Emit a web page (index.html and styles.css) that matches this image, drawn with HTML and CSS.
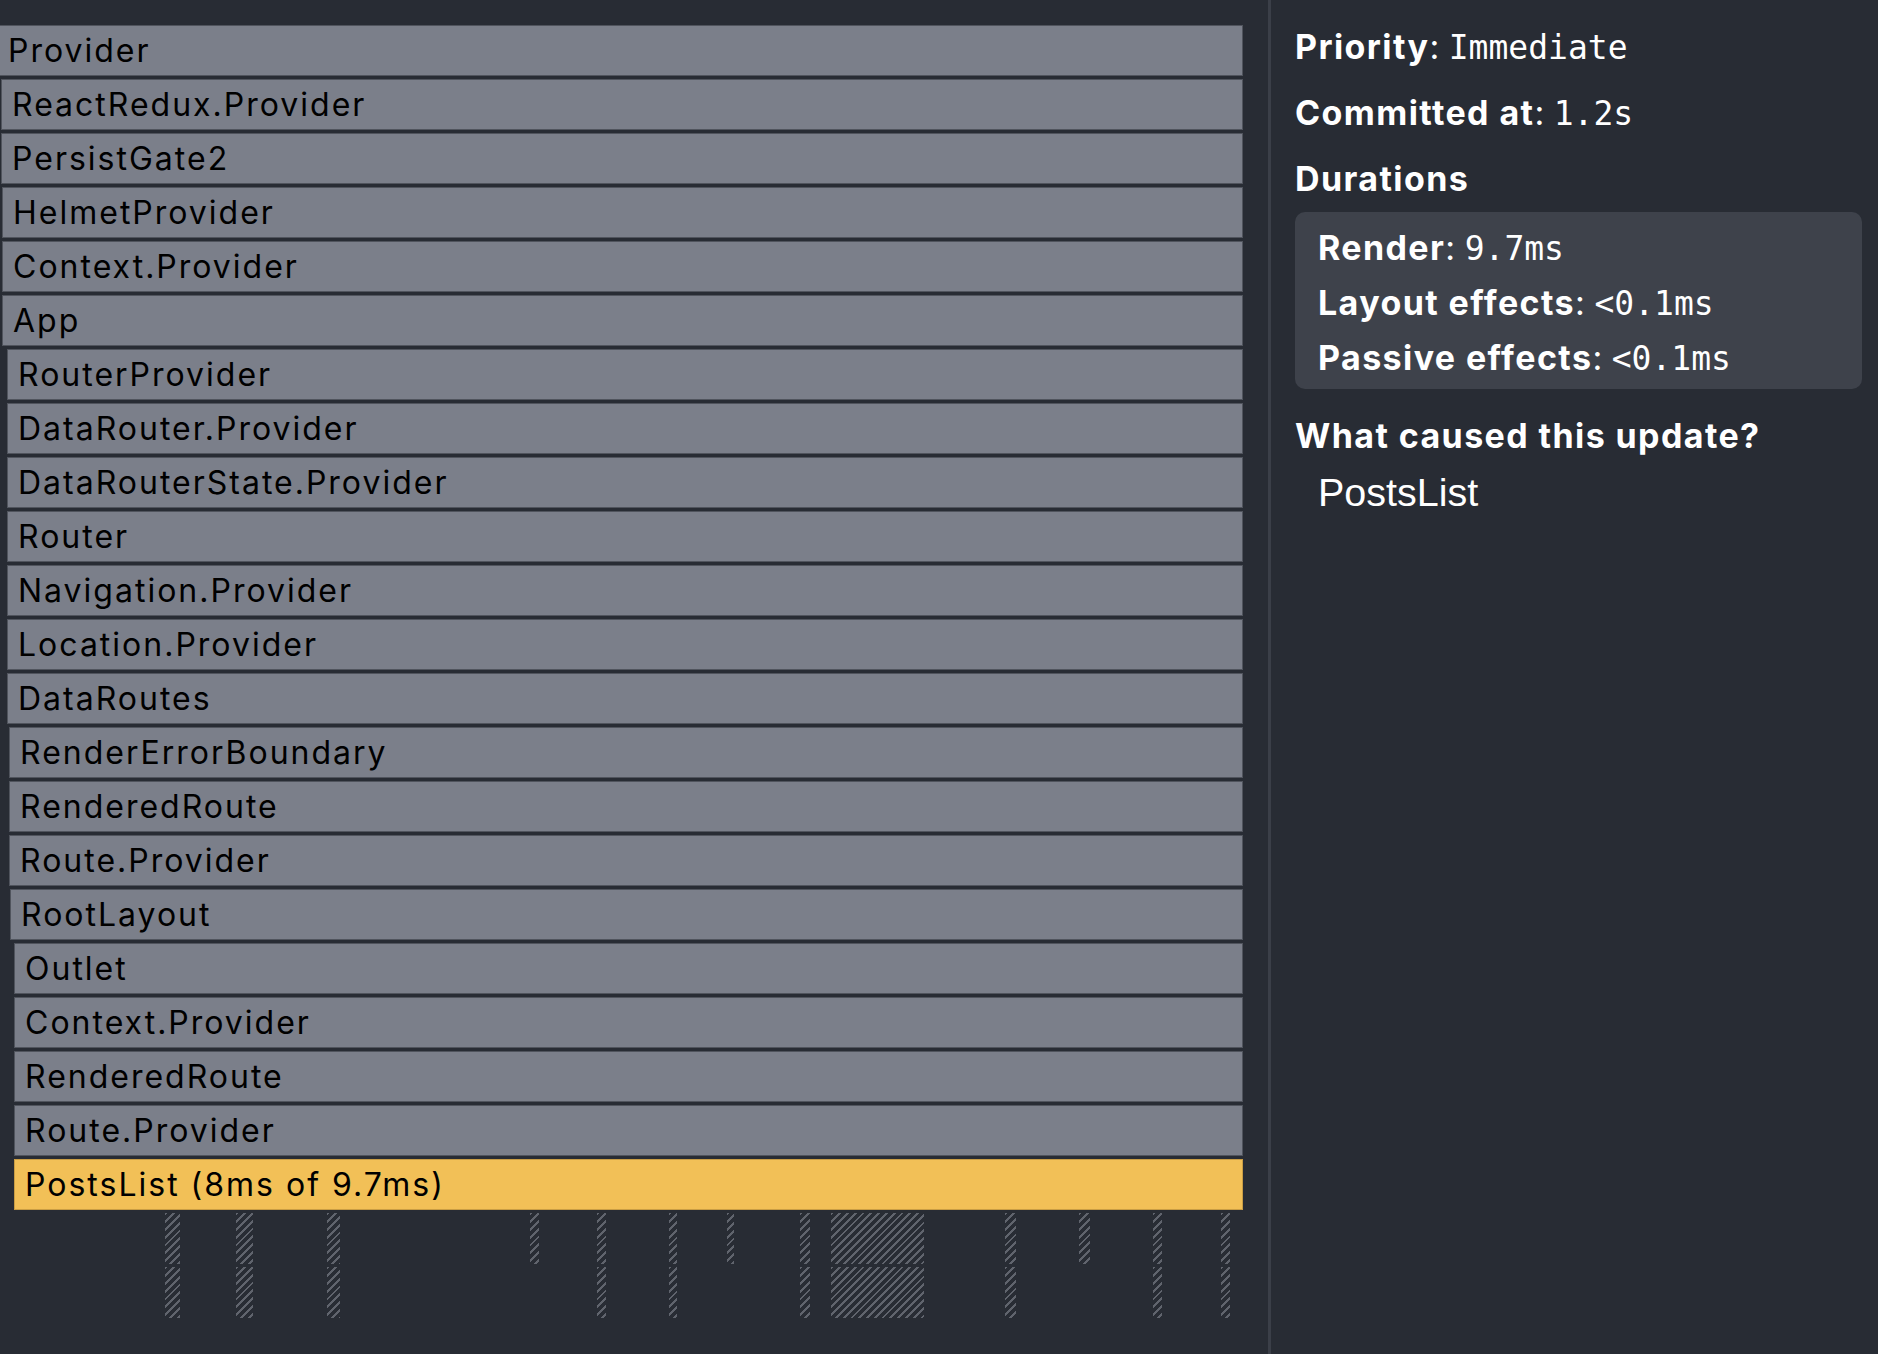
FILE: index.html
```html
<!DOCTYPE html>
<html lang="en">
<head>
<meta charset="utf-8">
<title>Profiler – commit details</title>
<link rel="stylesheet" href="styles.css">
</head>
<body>
<main class="chart">
  <div class="rows">
    <div class="bar" style="margin-left:-3px">Provider</div>
    <div class="bar" style="margin-left:1px">ReactRedux.Provider</div>
    <div class="bar" style="margin-left:1px">PersistGate2</div>
    <div class="bar" style="margin-left:2px">HelmetProvider</div>
    <div class="bar" style="margin-left:2px">Context.Provider</div>
    <div class="bar" style="margin-left:2px">App</div>
    <div class="bar" style="margin-left:7px">RouterProvider</div>
    <div class="bar" style="margin-left:7px">DataRouter.Provider</div>
    <div class="bar" style="margin-left:7px">DataRouterState.Provider</div>
    <div class="bar" style="margin-left:7px">Router</div>
    <div class="bar" style="margin-left:7px">Navigation.Provider</div>
    <div class="bar" style="margin-left:7px">Location.Provider</div>
    <div class="bar" style="margin-left:7px">DataRoutes</div>
    <div class="bar" style="margin-left:9px">RenderErrorBoundary</div>
    <div class="bar" style="margin-left:9px">RenderedRoute</div>
    <div class="bar" style="margin-left:9px">Route.Provider</div>
    <div class="bar" style="margin-left:10px">RootLayout</div>
    <div class="bar" style="margin-left:14px">Outlet</div>
    <div class="bar" style="margin-left:14px">Context.Provider</div>
    <div class="bar" style="margin-left:14px">RenderedRoute</div>
    <div class="bar" style="margin-left:14px">Route.Provider</div>
    <div class="bar hot" style="margin-left:14px">PostsList (8ms of 9.7ms)</div>
    <div class="ghost-row">
      <span class="ghost" style="left:165px;width:15px"></span>
      <span class="ghost" style="left:236px;width:17px"></span>
      <span class="ghost" style="left:327px;width:13px"></span>
      <span class="ghost" style="left:530px;width:9px"></span>
      <span class="ghost" style="left:597px;width:9px"></span>
      <span class="ghost" style="left:669px;width:8px"></span>
      <span class="ghost" style="left:727px;width:7px"></span>
      <span class="ghost" style="left:800px;width:10px"></span>
      <span class="ghost" style="left:831px;width:93px"></span>
      <span class="ghost" style="left:1005px;width:11px"></span>
      <span class="ghost" style="left:1079px;width:11px"></span>
      <span class="ghost" style="left:1153px;width:9px"></span>
      <span class="ghost" style="left:1221px;width:9px"></span>
    </div>
    <div class="ghost-row">
      <span class="ghost" style="left:165px;width:15px"></span>
      <span class="ghost" style="left:236px;width:17px"></span>
      <span class="ghost" style="left:327px;width:13px"></span>
      <span class="ghost" style="left:597px;width:9px"></span>
      <span class="ghost" style="left:669px;width:8px"></span>
      <span class="ghost" style="left:800px;width:10px"></span>
      <span class="ghost" style="left:831px;width:93px"></span>
      <span class="ghost" style="left:1005px;width:11px"></span>
      <span class="ghost" style="left:1153px;width:9px"></span>
      <span class="ghost" style="left:1221px;width:9px"></span>
    </div>
  </div>
</main>
<div class="divider"></div>
<aside class="details">
  <div class="line"><span class="label">Priority</span>: <span class="mono">Immediate</span></div>
  <div class="line"><span class="label">Committed at</span>: <span class="mono">1.2s</span></div>
  <div class="line"><span class="label">Durations</span></div>
  <div class="box">
    <div class="line"><span class="label">Render</span>: <span class="mono">9.7ms</span></div>
    <div class="line"><span class="label">Layout effects</span>: <span class="mono">&lt;0.1ms</span></div>
    <div class="line"><span class="label">Passive effects</span>: <span class="mono">&lt;0.1ms</span></div>
  </div>
  <div class="line section"><span class="label">What caused this update?</span></div>
  <div class="cause">PostsList</div>
</aside>
</body>
</html>
```

FILE: styles.css
```css
* { box-sizing: border-box; }

html, body {
  margin: 0;
  padding: 0;
}

body {
  width: 1878px;
  height: 1354px;
  overflow: hidden;
  background: #282c34;
  display: flex;
}

.chart {
  width: 1268px;
  flex: none;
  padding-top: 25px;
  overflow: hidden;
}

.rows {
  width: 1243px;
  display: flex;
  flex-direction: column;
  gap: 3px;
}

.bar {
  height: 51px;
  border: 1px solid #50545d;
  background: #7b7f8a;
  color: #000;
  font-family: Inter, "Noto Sans", sans-serif;
  font-size: 32px;
  letter-spacing: 2px;
  line-height: 45px;
  padding: 2px 0 0 10px;
  white-space: nowrap;
  overflow: hidden;
}

.bar.hot {
  background: #f2c057;
  border-color: #c99d44;
}

.ghost-row {
  position: relative;
  height: 51px;
}

.ghost {
  position: absolute;
  top: 0;
  bottom: 0;
  background: repeating-linear-gradient(135deg, #60646d 0 2px, transparent 2px 5.5px);
}

.divider {
  width: 3px;
  flex: none;
  background: #3b3f48;
}

.details {
  flex: 1;
  padding: 14px 16px 0 24px;
  color: #fff;
  font-family: Inter, "Noto Sans", sans-serif;
  font-size: 34px;
}

.line {
  height: 66px;
  line-height: 66px;
  white-space: nowrap;
}

.label {
  font-weight: 700;
  letter-spacing: 1.4px;
}

.mono {
  font-family: "DejaVu Sans Mono", monospace;
  font-size: 33px;
}

.box {
  background: #3e424b;
  border-radius: 10px;
  padding: 8px 16px 4px 23px;
}

.box .line {
  height: 55px;
  line-height: 55px;
}

.section {
  margin-top: 14px;
}

.cause {
  font-family: "Liberation Sans", Arial, sans-serif;
  font-size: 39.5px;
  line-height: 46px;
  padding-left: 23px;
}
```
